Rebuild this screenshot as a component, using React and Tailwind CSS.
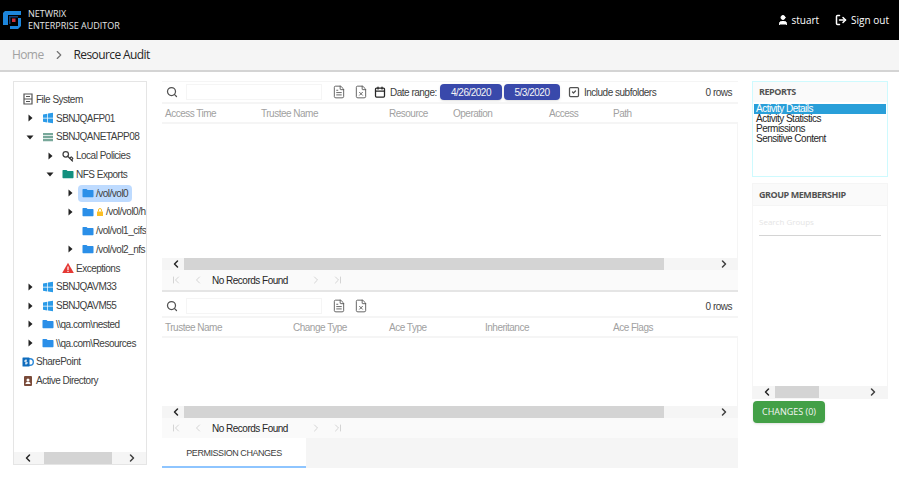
import React from "react";
import { ChevronLeft, ChevronRight, ChevronFirst, ChevronLast, Search, Calendar, SquareCheck, User, LogOut, Key, FileText, FileX } from "lucide-react";

const arial = "font-['Liberation_Sans',sans-serif] text-[10px] tracking-tighter";
const open = "font-['Open_Sans',sans-serif]";

function Win({ c = "#2b9be8" }) {
  return (
    <svg viewBox="0 0 12 12" className="h-3 w-3 shrink-0">
      <path fill={c} d="M1 2.4 5.3 1.7v4H1zM6 1.6 11 .8v4.9H6zM1 6.4h4.3v4L1 9.7zM6 6.4h5v4.9l-5-.8z" />
    </svg>
  );
}
function FolderIcon({ c = "#2b8fe8" }) {
  return (
    <svg viewBox="0 0 12 12" className="h-3 w-3 shrink-0">
      <path fill={c} d="M.5 2.500a.6.6 0 0 1 .6-.6h3.400l1.100 1.200h5.300a.6.6 0 0 1 .6.6v5.900a.6.6 0 0 1-.6.6H1.100a.6.6 0 0 1-.6-.6z" />
    </svg>
  );
}
function Caret({ open: o }) {
  return (
    <svg viewBox="0 0 8 8" className="h-2 w-2 shrink-0">
      {o ? <path fill="#222" d="M.5 2.500h7L4 6.500z" /> : <path fill="#222" d="M2.500 .5v7L6.500 4z" />}
    </svg>
  );
}
function Row({ indent, caret, root, icon, label, selected, extra }) {
  return (
    <div className={`flex items-center ${indent}`}>
      {root ? null : <span className="flex w-4 shrink-0 justify-center">{caret === undefined ? null : <Caret open={caret} />}</span>}
      <span className={`flex items-center gap-0.5 rounded-sm py-px pr-1 ${root ? "" : "pl-1"} ${selected ? "bg-blue-200" : ""}`}>
        {icon}
        {extra}
        <span className="whitespace-nowrap text-neutral-700">{label}</span>
      </span>
    </div>
  );
}
function HScroll({ thumb, offset }) {
  return (
    <div className="relative flex h-3 shrink-0 items-center bg-neutral-100">
      <span className={`flex ${offset} shrink-0 justify-end`}><ChevronLeft className="h-3 w-3 text-neutral-800" strokeWidth={3} /></span>
      <span className={`h-full ${thumb} bg-neutral-300`} />
      <ChevronRight className="absolute top-0 right-2 h-3 w-3 text-neutral-700" strokeWidth={3} />
    </div>
  );
}
function Toolbar({ children }) {
  return (
    <div className={`flex h-5 shrink-0 items-center text-neutral-700 ${arial}`}>
      <Search className="ml-1 h-3 w-3 text-neutral-600" strokeWidth={2.5} />
      <div className="ml-2 h-4 w-34 border border-neutral-100 bg-white" />
      <FileText className="ml-2.5 h-3.5 w-3.5 text-neutral-600" strokeWidth={1.5} />
      <FileX className="ml-2 h-3.5 w-3.5 text-neutral-600" strokeWidth={1.5} />
      {children}
    </div>
  );
}
function Head({ cols }) {
  return (
    <div className={`flex h-5.5 shrink-0 items-center border-y-2 border-neutral-100 pl-0.75 text-neutral-400 ${arial}`}>
      {cols.map(([t, w]) => <span key={t} className={`${w} shrink-0 whitespace-nowrap`}>{t}</span>)}
    </div>
  );
}
function Pager() {
  return (
    <div className={`flex h-5 shrink-0 items-center bg-neutral-50 pl-2 text-neutral-800 ${arial}`}>
      <ChevronFirst className="h-3 w-3 text-neutral-300" />
      <ChevronLeft className="ml-2.5 h-3 w-3 text-neutral-300" />
      <span className="ml-2 w-24">No Records Found</span>
      <ChevronRight className="ml-0.5 h-3 w-3 text-neutral-300" />
      <ChevronLast className="ml-2.5 h-3 w-3 text-neutral-300" />
    </div>
  );
}

export default function App() {
  return (
    <div className="h-[478px] w-[899px] overflow-hidden bg-white">
      <header className="flex h-10 items-center bg-black pr-2.5 pl-0.5 text-white">
        <svg viewBox="0 0 20 20" className="h-5 w-5 shrink-0">
          <path fill="#1d86dc" d="M3 1h16v4H6v10H1V3zM19 8v8l-3 3H8v-3h8V8z" />
          <path fill="#0d3f7a" d="M7 6h9v1.500H8.500V14H7z" />
          <rect x="10" y="8.500" width="3.500" height="3.500" fill="#c9303a" />
        </svg>
        <div className={`ml-1.5 text-[9px] leading-3 text-neutral-200 ${open}`}>
          <div>NETWRIX</div>
          <div>ENTERPRISE AUDITOR</div>
        </div>
        <div className={`ml-auto flex items-center text-[10px] ${open}`}>
          <User className="h-3 w-3 fill-white" />
          <span className="ml-0.5">stuart</span>
          <LogOut className="ml-4 h-3 w-3" strokeWidth={3} />
          <span className="ml-1">Sign out</span>
        </div>
      </header>

      <div className={`flex h-8 items-center border-b-2 border-neutral-300 bg-neutral-100 pl-3 text-xs tracking-tighter ${open}`}>
        <span className="text-neutral-400">Home</span>
        <ChevronRight className="ml-2 h-3.5 w-3.5 text-neutral-500" />
        <span className="ml-2 text-neutral-800">Resource Audit</span>
      </div>

      <div className="flex items-start pt-2.25 pl-3">
        <aside className={`ml-px flex h-96 w-33.5 shrink-0 flex-col border border-neutral-200 text-neutral-800 ${arial}`}>
          <div className="flex-1 overflow-hidden pt-2">
            <div className="grid h-75 grid-rows-16">
              <Row indent="pl-2" root icon={<svg viewBox="0 0 12 12" className="h-3 w-3 shrink-0"><path fill="none" stroke="#555" strokeWidth="1.200" d="M2 1h8v10H2zM2 6h8M4 3.500h4M4 8.500h4" /></svg>} label="File System" />
              <Row indent="pl-2" caret={false} icon={<Win />} label="SBNJQAFP01" />
              <Row indent="pl-2" caret={true} icon={<svg viewBox="0 0 12 12" className="h-3 w-3 shrink-0"><path fill="#78a89a" d="M1 2h10v2.200H1zM1 5h10v2.200H1zM1 8h10v2.200H1z" /></svg>} label="SBNJQANETAPP08" />
              <Row indent="pl-7" caret={false} icon={<Key className="h-3 w-3 shrink-0 -scale-y-100 text-neutral-700" strokeWidth={2.5} />} label="Local Policies" />
              <Row indent="pl-7" caret={true} icon={<FolderIcon c="#13907f" />} label="NFS Exports" />
              <Row indent="pl-12" caret={false} selected icon={<FolderIcon />} label="/vol/vol0" />
              <Row indent="pl-12" caret={false} icon={<FolderIcon />} extra={<svg viewBox="0 0 8 8" className="h-2 w-2 shrink-0"><rect x="1" y="3.500" width="6" height="4.500" fill="#fbbf24" /><path fill="none" stroke="#fbbf24" d="M2.500 3.500V2a1.500 1.500 0 0 1 3 0v1.500" /></svg>} label="/vol/vol0/h" />
              <Row indent="pl-12" icon={<FolderIcon />} label="/vol/vol1_cifs" />
              <Row indent="pl-12" caret={false} icon={<FolderIcon />} label="/vol/vol2_nfs" />
              <Row indent="pl-7" icon={<svg viewBox="0 0 12 12" className="h-3 w-3 shrink-0"><path fill="#e53935" d="M6 .8 11.800 11H.2z" /><path fill="#fff" d="M5.400 4.500h1.200v3.500H5.400zM5.400 8.800h1.200V10H5.400z" /></svg>} label="Exceptions" />
              <Row indent="pl-2" caret={false} icon={<Win />} label="SBNJQAVM33" />
              <Row indent="pl-2" caret={false} icon={<Win />} label="SBNJQAVM55" />
              <Row indent="pl-2" caret={false} icon={<FolderIcon />} label="\\qa.com\nested" />
              <Row indent="pl-2" caret={false} icon={<FolderIcon />} label="\\qa.com\Resources" />
              <Row indent="pl-2" root icon={<svg viewBox="0 0 12 12" className="h-3 w-3 shrink-0"><circle cx="8" cy="6" r="3.300" fill="none" stroke="#2b88d8" strokeWidth="1.400" /><rect x=".5" y="1.500" width="7" height="9" rx=".5" fill="#0f6cbd" /><path fill="none" stroke="#fff" d="M5 4.200H3v1.800h2v1.800H3" /></svg>} label="SharePoint" />
              <Row indent="pl-2" root icon={<svg viewBox="0 0 12 12" className="h-3 w-3 shrink-0"><rect x="2" y="1" width="8" height="10" rx="1" fill="#7a4b3a" /><circle cx="6" cy="5" r="1.500" fill="#fff" /><path fill="#fff" d="M3.500 9c0-3 5-3 5 0z" /></svg>} label="Active Directory" />
            </div>
          </div>
          <HScroll thumb="w-17" offset="w-7.5 pr-2.5" />
        </aside>

        <main className="ml-3.75 flex h-96 w-144 shrink-0 flex-col border-t border-neutral-100">
          <Toolbar>
            <Calendar className="ml-1.5 h-3 w-3 text-neutral-800" strokeWidth={2.5} />
            <span className="ml-1 w-12 whitespace-nowrap">Date range:</span>
            <span className="ml-0.5 flex h-4 w-15.5 items-center justify-center rounded-sm bg-[#3949ab] text-neutral-100 shadow-sm">4/26/2020</span>
            <span className="ml-0.5 flex h-4 w-14 items-center justify-center rounded-sm bg-[#3949ab] text-neutral-100 shadow-sm">5/3/2020</span>
            <SquareCheck className="ml-2 h-3 w-3 text-neutral-600" strokeWidth={2.5} />
            <span className="ml-1 whitespace-nowrap">Include subfolders</span>
            <span className="mr-1.5 ml-auto whitespace-nowrap">0 rows</span>
          </Toolbar>
          <Head cols={[["Access Time", "w-24"], ["Trustee Name", "w-32"], ["Resource", "w-16"], ["Operation", "w-24"], ["Access", "w-16"], ["Path", "w-16"]]} />
          <div className="h-33.5 shrink-0 border-r border-neutral-100" />
          <HScroll thumb="w-120" offset="w-5.5 pr-0.5" />
          <Pager />
          <div className="h-1.5 shrink-0 border-t-2 border-neutral-200" />
          <Toolbar>
            <span className="mr-1.5 ml-auto whitespace-nowrap">0 rows</span>
          </Toolbar>
          <Head cols={[["Trustee Name", "w-32"], ["Change Type", "w-24"], ["Ace Type", "w-24"], ["Inheritance", "w-32"], ["Ace Flags", "w-24"]]} />
          <div className="h-17 shrink-0 border-r border-neutral-100" />
          <HScroll thumb="w-120" offset="w-5.5 pr-0.5" />
          <Pager />
          <div className="flex h-7.5 shrink-0 bg-neutral-100">
            <div className="flex w-36 items-center justify-center border-b-2 border-blue-300 bg-white pt-1 font-['Liberation_Sans',sans-serif] text-[9px] tracking-tighter text-neutral-700">PERMISSION CHANGES</div>
          </div>
        </main>

        <section className="ml-3.5 w-34 shrink-0">
          <div className="h-24 border border-cyan-100">
            <div className={`flex h-5 items-center bg-neutral-50 pl-1.5 text-[9px] font-bold tracking-tighter text-neutral-600 ${open}`}>REPORTS</div>
            <div className="px-px pt-0.5 font-['Liberation_Sans',sans-serif] text-[10px] leading-2.5 tracking-tighter text-neutral-800">
              <div className="bg-[#299fd9] pl-0.5 text-white">Activity Details</div>
              <div className="pl-0.5">Activity Statistics</div>
              <div className="pl-0.5">Permissions</div>
              <div className="pl-0.5">Sensitive Content</div>
            </div>
          </div>
          <div className="mt-1.5 flex h-54 flex-col border border-neutral-100">
            <div className={`flex h-5.5 shrink-0 items-center border-b border-neutral-100 bg-neutral-50 pl-1.5 text-[9px] font-bold tracking-tighter text-neutral-600 ${open}`}>GROUP MEMBERSHIP</div>
            <div className={`mx-1.5 mt-2.5 h-5 border-b border-neutral-300 text-[8px] text-neutral-200 ${open}`}>Search Groups</div>
            <div className="flex-1" />
            <HScroll thumb="w-11" offset="w-5.5 pr-0.5" />
          </div>
          <button className={`mt-0.5 ml-px flex h-5.5 w-18 items-center justify-center rounded-sm bg-[#43a047] text-[9px] text-neutral-100 shadow-sm ${open}`}>CHANGES (0)</button>
        </section>
      </div>
    </div>
  );
}
